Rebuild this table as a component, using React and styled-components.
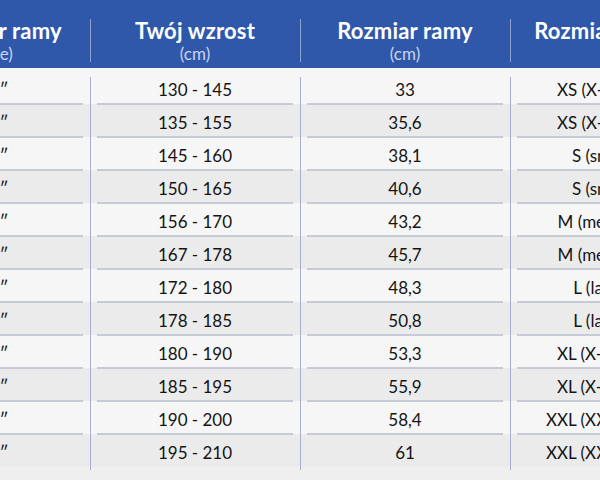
import React from 'react';
import styled, { createGlobalStyle } from 'styled-components';

const GlobalStyle = createGlobalStyle`
  html, body {
    margin: 0;
    padding: 0;
    background: #efefef;
  }
  body {
    font-family: Lato, "Noto Sans", "DejaVu Sans", sans-serif;
  }
`;

const COLS = '192px 210px 210px 184px';

const Frame = styled.div`
  width: 600px;
  height: 480px;
  overflow: hidden;
  background: #efefef;
`;

const Table = styled.div`
  width: 796px;
  margin-left: -102px;
`;

const HeaderRow = styled.div`
  display: grid;
  grid-template-columns: ${COLS};
  height: 68px;
  background: #2f58ab;
`;

const HeadCell = styled.div`
  position: relative;
  display: flex;
  flex-direction: column;
  align-items: center;
  padding-top: 18px;
  color: #fff;
  white-space: nowrap;

  &::before {
    content: '';
    display: ${(p) => (p.$first ? 'none' : 'block')};
    position: absolute;
    left: 0;
    top: 19px;
    bottom: 6px;
    width: 1px;
    background: rgba(255, 255, 255, 0.45);
  }
`;

const Title = styled.div`
  font-size: 22px;
  font-weight: 700;
  line-height: 26px;
  letter-spacing: 0.2px;
`;

const Sub = styled.div`
  font-size: 17px;
  line-height: 20px;
  color: #c9d4ee;
`;

const Row = styled.div`
  display: grid;
  grid-template-columns: ${COLS};
  height: ${(p) => (p.$first ? 36 : 33)}px;
  background: ${(p) => (p.$odd ? '#ebebeb' : '#f6f6f6')};
`;

const Cell = styled.div`
  position: relative;
  display: flex;
  align-items: center;
  justify-content: center;
  padding-top: ${(p) => (p.$first ? 7 : 3)}px;
  box-sizing: border-box;
  font-size: 17px;
  color: #141414;
  white-space: nowrap;

  &::before {
    content: '';
    display: ${(p) => (p.$col === 0 ? 'none' : 'block')};
    position: absolute;
    left: 0;
    top: ${(p) => (p.$first ? 9 : 0)}px;
    bottom: ${(p) => (p.$last ? -3 : 0)}px;
    width: 1px;
    background: #a7aecb;
  }

  &::after {
    content: '';
    display: ${(p) => (p.$last ? 'none' : 'block')};
    position: absolute;
    left: 7px;
    right: 7px;
    bottom: -1px;
    height: 2px;
    background: #c6c9d6;
    z-index: 1;
  }
`;

const headers = [
  { title: 'Rozmiar ramy', sub: '(cale)' },
  { title: 'Twój wzrost', sub: '(cm)' },
  { title: 'Rozmiar ramy', sub: '(cm)' },
  { title: 'Rozmiar ramy', sub: '' },
];

const rows = [
  ['13″', '130 - 145', '33', 'XS (X-Small)'],
  ['14″', '135 - 155', '35,6', 'XS (X-Small)'],
  ['15″', '145 - 160', '38,1', 'S (small)'],
  ['16″', '150 - 165', '40,6', 'S (small)'],
  ['17″', '156 - 170', '43,2', 'M (medium)'],
  ['18″', '167 - 178', '45,7', 'M (medium)'],
  ['19″', '172 - 180', '48,3', 'L (large)'],
  ['20″', '178 - 185', '50,8', 'L (large)'],
  ['21″', '180 - 190', '53,3', 'XL (X-Large)'],
  ['22″', '185 - 195', '55,9', 'XL (X-Large)'],
  ['23″', '190 - 200', '58,4', 'XXL (XX-Large)'],
  ['24″', '195 - 210', '61', 'XXL (XX-Large)'],
];

export default function App() {
  return (
    <>
      <GlobalStyle />
      <Frame>
        <Table>
          <HeaderRow>
            {headers.map((h, i) => (
              <HeadCell key={i} $first={i === 0}>
                <Title>{h.title}</Title>
                <Sub>{h.sub}</Sub>
              </HeadCell>
            ))}
          </HeaderRow>
          {rows.map((r, ri) => (
            <Row key={ri} $first={ri === 0} $odd={ri % 2 === 1}>
              {r.map((c, ci) => (
                <Cell
                  key={ci}
                  $col={ci}
                  $first={ri === 0}
                  $last={ri === rows.length - 1}
                >
                  {c}
                </Cell>
              ))}
            </Row>
          ))}
        </Table>
      </Frame>
    </>
  );
}
